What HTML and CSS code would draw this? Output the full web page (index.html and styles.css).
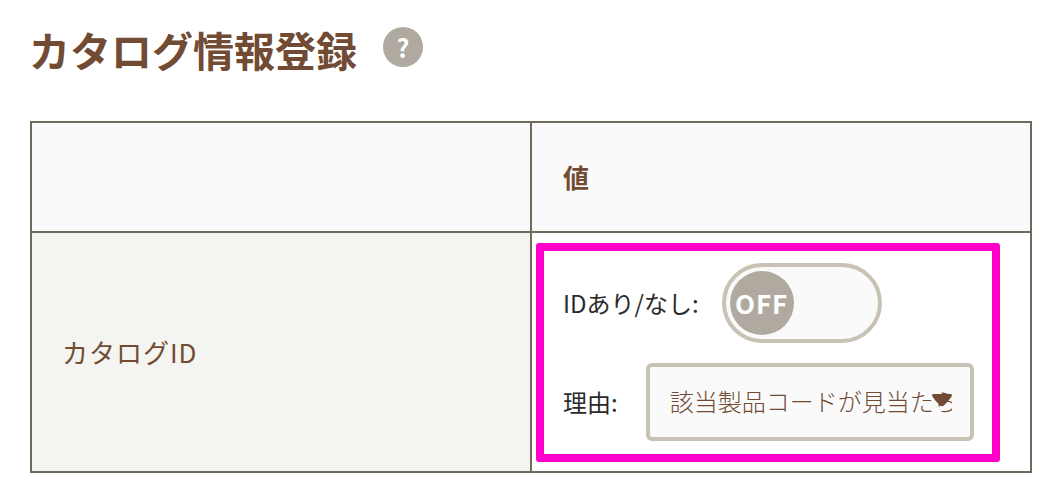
FILE: index.html
```html
<!DOCTYPE html>
<html lang="ja">
<head>
  <meta charset="UTF-8" />
  <title>カタログ情報登録</title>
  <link rel="stylesheet" href="styles.css">
</head>
<body>
  <div class="page-title">
    <h1>カタログ情報登録</h1>
    <span class="help-icon">?</span>
  </div>

  <table class="info-table">
    <tr>
      <th class="col-name"></th>
      <th class="col-value">値</th>
    </tr>
    <tr>
      <td class="row-name">カタログID</td>
      <td class="row-value">
        <div class="highlight">
          <div class="field field-id">
            <span class="field-label">IDあり/なし:</span>
            <div class="toggle">
              <span class="toggle-knob">OFF</span>
            </div>
          </div>
          <div class="field field-reason">
            <span class="field-label">理由:</span>
            <div class="select-box">
              <span class="select-text">該当製品コードが見当たらない</span>
              <svg class="select-arrow" width="22" height="15" viewBox="0 0 24 16">
                <path d="M3 1H21Q23.500 1 22.500 3.500Q19 9 14 13.500Q12 15 10 13.500Q5 9 1.500 3.500Q.5 1 3 1Z" fill="#714b33"/>
              </svg>
            </div>
          </div>
        </div>
      </td>
    </tr>
  </table>
</body>
</html>
```

FILE: styles.css
```css
* {
  margin: 0;
  padding: 0;
  box-sizing: border-box;
  font-family: "Noto Sans CJK JP", "Noto Sans", sans-serif;
}
body {
  background-color: white;
  padding: 24px 0 0 30px;
  color: #714b33;
}
.page-title {
  display: flex;
  align-items: center;
  gap: 26px;
  height: 50px;
}
.page-title h1 {
  font-size: 41px;
  line-height: 50px;
  font-weight: 700;
  margin-left: -1px;
}
.help-icon {
  width: 40px;
  height: 40px;
  margin-top: -4px;
  border-radius: 50%;
  background: #afa9a0;
  color: white;
  font-size: 25px;
  font-weight: 700;
  line-height: 40px;
  text-align: center;
}
.info-table {
  margin-top: 47px;
  width: 1002px;
  height: 352px;
  border-collapse: collapse;
  table-layout: fixed;
}
.info-table th,
.info-table td {
  border: 2px solid #6f6a5b;
  text-align: left;
  vertical-align: middle;
}
.info-table th {
  height: 110px;
  background: #fafafa;
  font-size: 26px;
  font-weight: 700;
  padding: 0 0 2px 31px;
}
.col-name {
  width: 500px;
}
.row-name {
  background: #f4f4f0;
  font-size: 26px;
  letter-spacing: 1px;
  padding: 0 0 2px 30px;
}
.row-value {
  background: white;
  padding: 9px 30px 9px 4px;
}
.highlight {
  border: 8px solid #ff00cc;
  border-radius: 3px;
  padding: 12px 18px 13px 19px;
  display: flex;
  flex-direction: column;
  gap: 20px;
}
.field {
  display: flex;
  align-items: center;
}
.field-id {
  gap: 23px;
}
.field-reason {
  gap: 28px;
}
.field-label {
  font-size: 24px;
  color: #2b2b2b;
  white-space: nowrap;
}
.toggle {
  width: 160px;
  height: 80px;
  border: 4px solid #c8c2b4;
  border-radius: 40px;
  background: #fafafa;
  padding: 4px;
}
.toggle-knob {
  display: block;
  width: 64px;
  height: 64px;
  border-radius: 50%;
  background: #afa9a0;
  color: white;
  font-size: 26px;
  font-weight: 700;
  line-height: 64px;
  text-align: center;
  letter-spacing: 1px;
}
.select-box {
  position: relative;
  width: 328px;
  height: 78px;
  border: 4px solid #c8c2b4;
  border-radius: 6px;
  background: #fafafa;
  padding: 0 18px 2px 20px;
  display: flex;
  align-items: center;
}
.select-text {
  font-size: 24px;
  font-weight: 300;
  white-space: nowrap;
  overflow: hidden;
}
.select-arrow {
  position: absolute;
  right: 17px;
  top: 26px;
}
```
